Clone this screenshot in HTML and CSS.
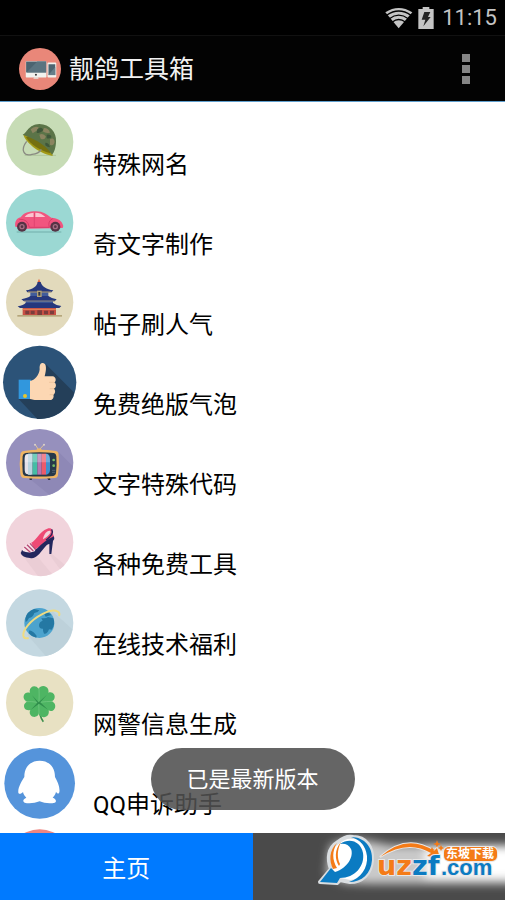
FILE: index.html
```
<!DOCTYPE html>
<html lang="zh-CN">
<head>
  <meta charset="UTF-8" />
  <meta name="viewport" content="width=device-width, initial-scale=1.0" />
  <title>靓鸽工具箱</title>
  <link rel="stylesheet" href="styles.css">
</head>
<body>
  <div class="status-bar">
    <svg class="wifi" viewBox="43 18 84 66">
      <path d="M84 82 L44 34 Q84 8 125 34 Z" fill="#c4c4c4"/>
      <path d="M48 43 Q84 17 121 43 M56 53 Q84 32 113 53 M65 63 Q84 48 104 63" fill="none" stroke="#000" stroke-width="4"/>
    </svg>
    <svg class="battery" viewBox="141 18 48 66">
      <path d="M142 24 H155 V18 H175 V24 H188 V84 H142 Z" fill="#c4c4c4"/>
      <path d="M160 33 H178 L171 48 H179 L157 76 L163 56 H152 Z" fill="#222"/>
    </svg>
    <span class="time">11:15</span>
  </div>

  <header>
    <svg class="logo" viewBox="57 144 124 124">
      <circle cx="119" cy="206" r="62" fill="#e98779"/>
      <rect x="77" y="183" width="61" height="48" rx="2" fill="#f2f2ee"/>
      <rect x="78" y="184" width="59" height="32" fill="#4c6470"/>
      <path d="M79 216 L111 184 H137 V216 Z" fill="#5b7480"/>
      <path d="M102 230 H113 L115 235 H99 Z" fill="#e4e4df"/>
      <circle cx="107" cy="223" r="3" fill="#333"/>
      <rect x="141" y="187" width="26" height="44" rx="3" fill="#f2f2ee"/>
      <rect x="144" y="192" width="20" height="32" fill="#4c6470"/>
      <path d="M144 224 L164 200 V224 Z" fill="#657e89"/>
    </svg>
    <h1>靓鸽工具箱</h1>
    <button class="more" aria-label="更多选项"><i></i><i></i><i></i></button>
  </header>

  <main>
    <ul class="tool-list">
      <li><a href="#">
        <svg viewBox="0 6 240 240">
          <circle cx="119" cy="126" r="101" fill="#c7dcb6"/>
          <path d="M74 166 H168" stroke="#afc69c" stroke-width="3"/>
          <path d="M70 104 C76 124 110 158 158 168 L156 150 L90 102 Z" fill="#a39a16"/>
          <path d="M78 112 C90 132 122 154 152 160 L150 148 L92 106 Z" fill="#75700f"/>
          <path d="M68 104 C82 98 84 74 118 72 C150 72 170 98 168 124 C168 142 162 160 156 164 C146 144 112 118 68 104 Z" fill="#5b7448"/>
          <path d="M92 88 Q104 76 116 82 Q114 92 98 100 Z M132 84 Q146 84 150 98 Q138 102 128 94 Z M118 104 Q130 98 138 110 Q132 122 122 116 Z M150 118 Q162 110 164 126 Q160 140 150 134 Z" fill="#8b8460"/>
          <path d="M112 88 Q124 78 130 90 Q120 102 110 98 Z M140 104 Q154 102 154 112 Q146 118 140 114 Z M136 128 Q148 128 150 142 Q142 142 136 136 Z" fill="#3f573a"/>
          <path d="M80 124 C60 150 72 170 96 163 C110 162 120 155 124 148" fill="none" stroke="#8a8b82" stroke-width="4"/>
        </svg>
        <span>特殊网名</span>
      </a></li>
      <li><a href="#">
        <svg viewBox="0 6 240 240">
          <circle cx="119" cy="128" r="101" fill="#9bd8d3"/>
          <path d="M50 154 H184 V158 H50 Z" fill="#7fbcb8"/>
          <path d="M46 140 C44 126 48 116 62 112 C72 98 86 94 108 94 C130 94 140 104 154 113 C174 114 186 122 190 138 L188 144 L80 146 Z" fill="#f1557f"/>
          <path d="M74 111 Q82 99 101 98 L101 111 Z M106 98 Q124 98 136 111 L106 111 Z" fill="#fbc3cf"/>
          <path d="M58 118 Q84 116 88 142 H148 Q142 124 158 116" fill="none" stroke="#d93d6a" stroke-width="3"/>
          <path d="M103 98 V140" stroke="#d93d6a" stroke-width="2"/>
          <circle cx="66" cy="140" r="15" fill="#553345"/>
          <circle cx="66" cy="140" r="8" fill="#a56d82"/>
          <circle cx="66" cy="140" r="4" fill="#553345"/>
          <circle cx="166" cy="140" r="15" fill="#553345"/>
          <circle cx="166" cy="140" r="8" fill="#a56d82"/>
          <circle cx="166" cy="140" r="4" fill="#553345"/>
        </svg>
        <span>奇文字制作</span>
      </a></li>
      <li><a href="#">
        <svg viewBox="0 6 240 240">
          <circle cx="119" cy="127" r="101" fill="#e2dabc"/>
          <path d="M117 56 L122 68 H112 Z" fill="#e2673f"/>
          <path d="M113 66 H122 C126 80 140 88 160 91 L154 97 H82 L78 91 C98 88 110 80 113 66 Z" fill="#26387d"/>
          <rect x="91" y="96" width="54" height="15" fill="#415c9b"/>
          <path d="M84 96 H154" stroke="#b29c70" stroke-width="3"/>
          <path d="M91 108 H145 Q154 115 170 118 L164 124 H72 L64 118 Q84 114 91 108 Z" fill="#26387d"/>
          <rect x="111" y="92" width="14" height="19" fill="#b3a275"/>
          <rect x="115" y="96" width="6" height="11" fill="#303747"/>
          <rect x="77" y="122" width="82" height="10" fill="#415c9b"/>
          <path d="M72 123 H164" stroke="#b29c70" stroke-width="2"/>
          <path d="M78 128 H158 Q168 136 184 138 L178 144 H60 L53 139 Q70 136 78 128 Z" fill="#26387d"/>
          <rect x="68" y="144" width="100" height="21" fill="#c94f43"/>
          <path d="M68 148 H168" stroke="#e28a59" stroke-width="3"/>
          <path d="M76 152 H88 V163 H76 Z M92 152 H104 V163 H92 Z M112 151 H126 V165 H112 Z M132 152 H144 V163 H132 Z M150 152 H162 V163 H150 Z" fill="#7c3d3c"/>
          <rect x="52" y="165" width="134" height="5" fill="#b5a67b"/>
        </svg>
        <span>帖子刷人气</span>
      </a></li>
      <li><a href="#">
        <svg viewBox="0 6 240 240">
          <circle cx="119" cy="127" r="110" fill="#2c5378"/>
          <path d="M137 72 L223 158 A110 110 0 0 1 112 237 L56 177 L120 150 Z" fill="#243f59"/>
          <rect x="56" y="119" width="37" height="58" fill="#3197dd"/>
          <circle cx="75" cy="168" r="6" fill="#e6c52d"/>
          <path d="M90 123 C104 122 118 104 119 88 C118 74 122 68 129 69 C140 70 140 88 134 109 H158 C168 110 170 124 163 127 C170 132 169 143 162 146 C168 152 165 162 160 164 C163 172 158 180 150 180 H104 C98 180 96 177 90 177 Z" fill="#fcd7b3"/>
          <path d="M147 127 H163 M149 146 H162 M149 164 H160" stroke="#e9bc94" stroke-width="2"/>
        </svg>
        <span>免费绝版气泡</span>
      </a></li>
      <li><a href="#">
        <svg viewBox="0 6 240 240">
          <circle cx="119" cy="128" r="101" fill="#9690bd"/>
          <path d="M176 96 L218 138 A101 101 0 0 1 148 224 L86 174 Z" fill="#8e88b6"/>
          <path d="M116 90 L106 74 M117 90 L132 74" stroke="#dcc39b" stroke-width="3"/>
          <path d="M107 92 Q117 78 128 92 Z" fill="#eab66b"/>
          <circle cx="105" cy="74" r="3" fill="#ddd3cb"/>
          <circle cx="132" cy="74" r="3" fill="#ddd3cb"/>
          <path d="M88 172 H98 L95 180 H89 Z M140 172 H150 L151 180 H145 Z" fill="#2c3546"/>
          <path d="M72 93 Q117 86 168 93 Q176 95 176 105 Q179 135 174 165 Q173 174 164 174 Q117 178 72 174 Q62 174 61 160 Q57 132 61 105 Q62 94 72 93 Z" fill="#efb563"/>
          <path d="M77 99 Q117 94 162 99 Q168 100 169 108 Q171 135 168 160 Q167 167 160 168 Q117 171 78 168 Q69 168 68 156 Q66 132 68 108 Q69 100 77 99 Z" fill="#26384a"/>
          <path d="M79 103 Q85 101 94 101 V164 Q85 164 80 162 Q74 160 74 148 V116 Q74 105 79 103 Z" fill="#e4e1e8"/>
          <path d="M84 101 H98 V164 H84 Z" fill="#b8d3df"/>
          <path d="M98 101 H112 V164 H98 Z" fill="#45bca5"/>
          <path d="M112 101 H125 V164 H112 Z" fill="#b674b1"/>
          <path d="M125 101 H138 V164 H125 Z" fill="#eb5b6b"/>
          <path d="M138 101 Q149 101 150 114 V150 Q149 163 138 164 Z" fill="#3f91cc"/>
          <path d="M74 116 Q75 102 86 101 H140 Q149 102 150 127 H74 Z" fill="#fff" opacity=".25"/>
          <circle cx="161" cy="120" r="4" fill="#78bf65"/>
          <circle cx="161" cy="137" r="4" fill="#78bf65"/>
          <path d="M156 151 H166 M156 157 H166" stroke="#627282" stroke-width="2"/>
        </svg>
        <span>文字特殊代码</span>
      </a></li>
      <li><a href="#">
        <svg viewBox="0 6 240 240">
          <circle cx="119" cy="127" r="101" fill="#f1d4dc"/>
          <path d="M66 164 L116 174 L156 222 Q136 230 114 228 Z M147 162 H156 L194 194 L180 208 Z" fill="#eacdd5"/>
          <path d="M84 132 C106 130 118 92 142 86 C152 82 160 88 158 100 L162 110 L130 132 L106 148 Z" fill="#ee4a75"/>
          <path d="M129 116 C132 100 143 91 149 92 C156 94 151 104 129 118 Z" fill="#f1d4dc"/>
          <path d="M155 88 C163 101 149 111 138 121" fill="none" stroke="#23275d" stroke-width="4"/>
          <path d="M66 150 Q64 156 62 159 Q66 172 90 174 C108 178 119 160 130 147 C138 136 144 132 148 132 L148 162 H154 L159 123 Q165 116 162 109 C142 118 124 132 112 145 C104 152 88 157 66 150 Z" fill="#23275d"/>
          <path d="M68 148 C72 136 82 129 94 129 L106 153 C94 159 80 158 68 153 Z" fill="#f8e2e8"/>
          <path d="M73 141 L91 157 M81 134 L100 153 M90 130 L107 149" stroke="#b64a76" stroke-width="4"/>
        </svg>
        <span>各种免费工具</span>
      </a></li>
      <li><a href="#">
        <svg viewBox="0 6 240 240">
          <circle cx="119" cy="129" r="101" fill="#c4d8e1"/>
          <path d="M157 94 L217 148 A101 101 0 0 1 137 228 L82 164 Z" fill="#bdd1da"/>
          <circle cx="118" cy="129" r="45" fill="#4ca3ce"/>
          <path d="M76 116 Q80 94 103 87 L118 91 Q113 99 103 99 Q99 112 87 114 Q83 123 77 126 Z" fill="#2478a3"/>
          <path d="M124 114 Q138 116 144 111 L160 115 Q167 133 155 149 L147 148 Q142 163 132 161 Q128 154 129 146 Q117 147 117 136 Q117 126 128 122 Z" fill="#2478a3"/>
          <path d="M88 151 Q102 155 110 168 L109 173 Q94 170 86 160 Z" fill="#2478a3"/>
          <path d="M131 98 Q145 94 154 105 L137 110 Z" fill="#2478a3"/>
          <path d="M86 174 C66 180 64 160 83 137 C104 110 153 84 172 94 Q181 98 177 108" fill="none" stroke="#eedb82" stroke-width="6"/>
        </svg>
        <span>在线技术福利</span>
      </a></li>
      <li><a href="#">
        <svg viewBox="0 6 240 240">
          <circle cx="119" cy="128" r="101" fill="#e8e1c3"/>
          <path d="M116 130 Q117 169 130 185" fill="none" stroke="#3d8f4d" stroke-width="5"/>
          <path d="M116 126 C108 121 88 108 89 92 C91 77 107 74 116 86 C121 74 141 75 145 89 C146 93 146 96 145 98 C157 93 168 104 163 116 C161 121 158 123 154 124 C169 128 169 147 158 152 C153 154 149 153 146 151 C149 165 139 174 128 171 C121 170 118 166 117 160 C114 173 97 174 91 164 C88 159 89 154 91 150 C78 154 69 144 73 133 C75 129 78 126 82 125 C70 122 67 107 76 100 C80 97 86 97 90 99 Z" fill="#4eb563"/>
          <path d="M117 126 Q118 105 117 84 M119 127 Q140 124 159 124 M116 128 Q117 145 117 163 M114 127 Q94 124 77 125" stroke="#79cc87" stroke-width="2" fill="none"/>
          <path d="M116 127 L96 106 L112 128 L92 150 L117 131 L144 149 L121 127 L141 104 Z" fill="#308e4c"/>
        </svg>
        <span>网警信息生成</span>
      </a></li>
      <li><a href="#">
        <svg viewBox="0 6 240 240">
          <circle cx="119" cy="130" r="106" fill="#5594db"/>
          <path d="M119 62 C146 62 165 80 165 111 C172 124 181 142 178 157 C176 164 171 160 168 156 C166 165 161 170 158 173 C168 176 171 185 164 188 C153 191 132 190 119 184 C104 190 85 191 74 188 C67 185 69 177 79 173 C75 169 70 163 69 156 C65 160 58 165 55 158 C53 144 65 123 73 111 C73 80 92 62 119 62 Z" fill="#fff"/>
        </svg>
        <span>QQ申诉助手</span>
      </a></li>
      <li><a href="#" aria-label="更多工具">
        <svg viewBox="0 6 240 240">
          <circle cx="119" cy="129" r="101" fill="#ee8681"/>
        </svg>
      </a></li>
    </ul>
  </main>

  <nav class="tabs">
    <button class="active">主页</button>
    <button aria-label="更多"></button>
    <svg class="watermark" viewBox="0 0 185 67">
      <defs>
        <filter id="glow" x="-20%" y="-40%" width="140%" height="180%">
          <feGaussianBlur stdDeviation="5"/>
        </filter>
      </defs>
      <g filter="url(#glow)" fill="#fff">
        <path d="M10 12 L30 5 L50 8 L70 12 H200 V51 H50 L25 50 L6 42 Z" opacity=".7"/>
        <path d="M105 14 H205 V46 H105 Z"/>
      </g>
      <path d="M0 49 L11 36 C7 26 8 15 18 9 C24 4 29 3 33 4 C46 4 53 14 52 27 C51 41 42 49 30 49 L20 47 L17 50 Z" fill="#fff" stroke="#d9dde0" stroke-width="4" stroke-linejoin="round"/>
      <path d="M17 10 C9 17 9 28 13 36 L17 35 C12 27 12 18 17 10 Z M21 9 C14 17 15 27 19 33 L20 31 C17 25 17 17 21 9 Z" fill="#f47b17"/>
      <path d="M0 49 L11 35 L15 39 C28 35 34 23 31 16 Q28 10 20 11 C30 4 41 9 43 20 C45 33 35 45 20 45 L17 50 Z" fill="#0b7bc2"/>
      <path d="M31 4 C45 4 53 15 52 27 C51 41 42 49 29 49 C41 45 48 35 47 23 Q45 8 31 4 Z" fill="#0b7bc2"/>
      <path d="M60 24 Q87 0 114 18 L117 15 L120 25 L107 23 L111 20 Q88 6 60 24 Z" fill="#f47b17" stroke="#e8e8e8" stroke-width="2" paint-order="stroke"/>
      <path d="M117 7 L118 10 L121 11 L118 12 L117 15 L116 12 L113 11 L116 10 Z M112 14 L113 16 L115 17 L113 18 L112 20 L111 18 L109 17 L111 16 Z M121 12 L122 14 L124 15 L122 16 L121 18 L120 16 L118 15 L120 14 Z" fill="#f47b17"/>
      <text class="mark-big" x="57" y="42"><tspan fill="#f47b17">uz</tspan><tspan fill="#0b7bc2">zf</tspan></text>
      <text class="mark-small" x="121" y="42" fill="#0b7bc2">.com</text>
      <rect x="124" y="14" width="53" height="14" rx="5" fill="#f47b17" stroke="#e8e8e8" stroke-width="2" paint-order="stroke"/>
      <text class="mark-label" x="126" y="25">东坡下载</text>
    </svg>
  </nav>

  <div class="toast" role="status">已是最新版本</div>
</body>
</html>
```
FILE: styles.css
```
* {
  box-sizing: border-box;
}

body {
  margin: 0;
  height: 100vh;
  display: flex;
  flex-direction: column;
  position: relative;
  overflow: hidden;
  background-color: white;
  color: black;
  font-family: Roboto, "Noto Sans CJK SC", sans-serif;
  font-size: 24px;
}

.status-bar {
  display: flex;
  justify-content: flex-end;
  align-items: center;
  height: 35px;
  padding: 0 8px;
  background-color: black;
  color: #c4c4c4;
}

.wifi {
  width: 28px;
  height: 22px;
}

.battery {
  width: 16px;
  height: 22px;
  margin: 0 8px 0 5px;
}

.time {
  font-size: 22px;
  line-height: 32px;
}

header {
  display: flex;
  align-items: center;
  gap: 8px;
  height: 67px;
  padding: 0 23px 0 19px;
  background-color: #030303;
  border-top: 1px solid #111;
  border-bottom: 1px solid #5f9fce;
  color: #f2f2f2;
}

.logo {
  width: 42px;
  height: 42px;
}

header h1 {
  flex: 1;
  margin: 0;
  padding-top: 3px;
  font-size: 25px;
  line-height: 32px;
  font-weight: 400;
}

.more {
  display: flex;
  flex-direction: column;
  align-items: center;
  gap: 3px;
  width: 32px;
  padding: 0;
  border: none;
  background: none;
}

.more i {
  width: 8px;
  height: 8px;
  background-color: #858585;
}

main {
  flex: 1;
  min-height: 0;
  overflow-y: auto;
  scrollbar-width: none;
}

.tool-list {
  margin: 0;
  padding: 0;
  list-style: none;
}

.tool-list a {
  display: flex;
  align-items: flex-end;
  gap: 13px;
  color: black;
  text-decoration: none;
}

.tool-list svg {
  width: 80px;
  height: 80px;
}

.tool-list span {
  line-height: 32px;
  padding-bottom: 1px;
}

.tabs {
  display: flex;
  height: 67px;
  position: relative;
  background-color: #4a4a4a;
}

.tabs button {
  flex: 1;
  padding: 0;
  border: none;
  background-color: #4a4a4a;
  color: white;
  font-family: inherit;
  font-size: 24px;
}

.tabs .active {
  background-color: #007aff;
}

.watermark {
  position: absolute;
  right: 0;
  bottom: 0;
  width: 185px;
  height: 67px;
  overflow: visible;
  clip-path: inset(0 0 0 -20px);
  pointer-events: none;
}

.watermark text {
  stroke: #e8e8e8;
  stroke-width: 2px;
  paint-order: stroke;
}

.mark-big {
  font: bold 27px "DejaVu Sans", sans-serif;
}

.mark-small {
  font: bold 22px "Liberation Sans", sans-serif;
}

.watermark .mark-label {
  font: bold 12px "Noto Sans CJK SC", sans-serif;
  fill: white;
  stroke: none;
}

.toast {
  position: absolute;
  left: 50%;
  bottom: 90px;
  transform: translateX(-50%);
  padding: 16px 36px 14px;
  border-radius: 31px;
  background-color: rgba(80, 80, 80, 0.88);
  color: white;
  font-size: 22px;
  line-height: 32px;
  white-space: nowrap;
}
```
